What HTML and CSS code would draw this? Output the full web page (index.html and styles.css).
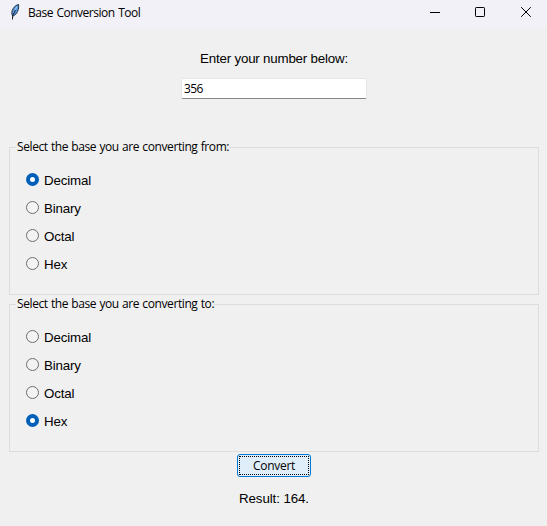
FILE: index.html
```
<!DOCTYPE html>
<html lang="en">
<head>
<meta charset="utf-8">
<title>Base Conversion Tool</title>
<link rel="stylesheet" href="styles.css">
</head>
<body>
<header class="titlebar">
  <svg class="feather" width="10" height="16" viewBox="0 0 10 16"><path d="M2.3 11.5C.6 7 4 1.5 8.5.5 9.4 4.8 7 10.5 3.2 12z" fill="#4f94df" stroke="#26303f"/><path d="M6.8 2.5 3.5 9" stroke="#a9d2fa" fill="none"/><path d="M5.5 6 2.7 11.5 2.5 15.5" stroke="#111c2c" fill="none"/></svg>
  <h1 class="title"><span>Base Conversion Tool</span></h1>
  <div class="controls">
    <svg width="10" height="10" viewBox="0 0 10 10"><path d="M0 5.5h10"/></svg>
    <svg width="10" height="10" viewBox="0 0 10 10"><rect x=".5" y=".5" width="9" height="9" rx=".7"/></svg>
    <svg class="close" width="10" height="10" viewBox="0 0 10 10"><path d="M.2.2 9.8 9.8M9.8.2.2 9.8"/></svg>
  </div>
</header>
<main class="content">
  <label class="prompt" for="num">Enter your number below:</label>
  <input class="entry" id="num" type="text" value="356">
  <section class="group">
    <h2 class="legend">Select the base you are converting from:</h2>
    <label class="option"><input type="radio" name="from" checked>Decimal</label>
    <label class="option"><input type="radio" name="from">Binary</label>
    <label class="option"><input type="radio" name="from">Octal</label>
    <label class="option"><input type="radio" name="from">Hex</label>
  </section>
  <section class="group">
    <h2 class="legend">Select the base you are converting to:</h2>
    <label class="option"><input type="radio" name="to">Decimal</label>
    <label class="option"><input type="radio" name="to">Binary</label>
    <label class="option"><input type="radio" name="to">Octal</label>
    <label class="option"><input type="radio" name="to" checked>Hex</label>
  </section>
  <button class="convert" type="button"><span>Convert</span></button>
  <p class="result">Result: 164.</p>
</main>
</body>
</html>
```
FILE: styles.css
```
* { box-sizing: border-box; }
body {
  margin: 0;
  height: 526px;
  overflow: hidden;
  background: #f0f0f0;
  color: #000;
  font: 13.333px/16px "Liberation Sans", Arial, sans-serif;
}
.titlebar {
  display: flex;
  height: 28px;
  background: #f2f1f7;
  padding: 4px 16px 0 10px;
}
.title {
  margin: 1px 0 0 8px;
  font: 12px/16px "Open Sans", sans-serif;
  letter-spacing: -0.48px;
  word-spacing: 0.8px;
}
.controls {
  display: flex;
  gap: 35px;
  margin: 3px 0 0 auto;
}
.controls svg { fill: none; stroke: #000; }
.controls .close { margin-left: 1px; }
.content {
  display: flex;
  flex-direction: column;
  align-items: center;
  padding: 23px 8px 0 9px;
}
.prompt {
  height: 16px;
  letter-spacing: -0.2px;
}
.entry {
  width: 186px;
  height: 21px;
  margin-top: 11px;
  padding: 0 2px;
  border: 1px solid #e6e6e6;
  border-bottom-color: #868686;
  border-radius: 2px;
  background: #fff;
  outline: 0;
  font: 12px/18px "Open Sans", sans-serif;
  letter-spacing: -0.6px;
}
.group {
  display: flex;
  flex-direction: column;
  width: 530px;
  height: 148px;
  padding-left: 16px;
  border: 1px solid #dcdcdc;
}
.entry + .group { margin-top: 48px; }
.group + .group { margin-top: 9px; }
.legend {
  align-self: flex-start;
  height: 16px;
  margin: -9px 0 11px -10px;
  padding: 0 0 0 1px;
  background: #f0f0f0;
  font: 12px/16px "Open Sans", sans-serif;
  letter-spacing: -0.4px;
  word-spacing: 0.5px;
  white-space: nowrap;
}
.option {
  display: flex;
  align-items: center;
  height: 28px;
  padding-top: 1px;
  letter-spacing: -0.15px;
}
.option input {
  appearance: none;
  width: 13px;
  height: 13px;
  margin: -2px 5px 0 0;
  border: 1px solid #6d6d6d;
  border-radius: 50%;
  background: #f3f3f3;
}
.option input:checked {
  border: 4px solid #005fb8;
  background: #fff;
}
.convert {
  width: 74px;
  height: 23px;
  margin-top: 2px;
  padding: 1px;
  border: 1px solid #0078d4;
  border-radius: 3px;
  background: #e0eef9;
  color: #000;
  font: 12px/18px "Open Sans", sans-serif;
  letter-spacing: -0.3px;
}
.convert span {
  display: block;
  height: 19px;
  border: 1px dotted #000;
}
.result {
  margin: 14px 0 0;
  letter-spacing: -0.1px;
}
```
